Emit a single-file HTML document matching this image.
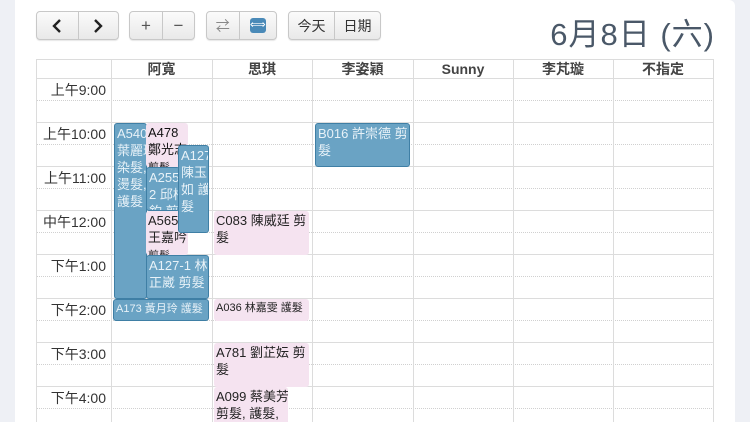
<!DOCTYPE html><html><head><meta charset="utf-8"><style>
*{margin:0;padding:0;box-sizing:border-box}
html,body{width:750px;height:422px;overflow:hidden}
body{background:#eef0f5;font-family:"Liberation Sans","Noto Sans CJK TC",sans-serif;position:relative}
.card{position:absolute;left:15px;top:0;width:720px;height:422px;background:#fff;border-radius:0 6px 0 0}
.bg{position:absolute;display:flex;height:29px;top:11px;border:1px solid #c8c8c8;border-radius:4px;background:linear-gradient(#fbfbfb,#e9e9e9);box-shadow:0 1px 1px rgba(0,0,0,.1)}
.bg div{height:100%;display:flex;align-items:center;justify-content:center;font-size:14px;color:#333;border-left:1px solid #c8c8c8}
.bg div:first-child{border-left:none}
.title{position:absolute;right:35px;top:9px;font-size:31px;color:#4a5868;font-weight:normal;letter-spacing:1px}
.ln{position:absolute;left:36px;width:678px;height:0}
.s{border-top:1px solid #dcdcdc}
.d{border-top:1px dotted #d0d0d0}
.v{position:absolute;top:59px;height:363px;border-left:1px solid #dcdcdc}
.hd{position:absolute;top:59px;height:20px;font-size:14px;font-weight:bold;color:#444;text-align:center;line-height:20px}
.t{position:absolute;left:36px;width:70px;text-align:right;font-size:14px;color:#333}
.e{position:absolute;font-size:13px;line-height:17px;padding:1px 1px 1px 2px;overflow:hidden;border-radius:3px;white-space:nowrap}
.b{background:#6aa3c4;border:1px solid #3f7fa5;color:#e8f2f8}
.p{background:#f5e3f0;color:#222}
.sm{font-size:11px}
</style></head><body>
<div class="card"></div>
<div class="bg" style="left:36px;width:83px"><div style="width:41px"><svg width="10" height="14" viewBox="0 0 10 14"><path d="M8 1L2 7l6 6" fill="none" stroke="#222" stroke-width="2.4"/></svg></div><div style="width:41px"><svg width="10" height="14" viewBox="0 0 10 14"><path d="M2 1l6 6-6 6" fill="none" stroke="#222" stroke-width="2.4"/></svg></div></div>
<div class="bg" style="left:129px;width:66px"><div style="width:33px;font-size:17px;color:#555">+</div><div style="width:33px;font-size:17px;color:#555">−</div></div>
<div class="bg" style="left:206px;width:71px"><div style="width:32px;color:#888">⇄</div><div style="width:38px"><span style="display:inline-block;width:16px;height:15px;background:#4a8ab8;border-radius:3px;color:#fff;font-size:11px;line-height:15px;text-align:center">⟺</span></div></div>
<div class="bg" style="left:288px;width:93px"><div style="width:46px">今天</div><div style="width:47px">日期</div></div>
<div class="title">6月8日 (六)</div>
<div class="ln s" style="top:59px"></div>
<div class="ln s" style="top:78px"></div>
<div class="ln d" style="top:100px"></div>
<div class="ln s" style="top:122px"></div>
<div class="ln d" style="top:144px"></div>
<div class="ln s" style="top:166px"></div>
<div class="ln d" style="top:188px"></div>
<div class="ln s" style="top:210px"></div>
<div class="ln d" style="top:232px"></div>
<div class="ln s" style="top:254px"></div>
<div class="ln d" style="top:276px"></div>
<div class="ln s" style="top:298px"></div>
<div class="ln d" style="top:320px"></div>
<div class="ln s" style="top:342px"></div>
<div class="ln d" style="top:364px"></div>
<div class="ln s" style="top:386px"></div>
<div class="ln d" style="top:408px"></div>
<div class="v" style="left:36px"></div><div class="v" style="left:111px"></div><div class="v" style="left:212px"></div><div class="v" style="left:312px"></div><div class="v" style="left:413px"></div><div class="v" style="left:513px"></div><div class="v" style="left:613px"></div><div class="v" style="left:713px"></div>
<div class="hd" style="left:111px;width:101px">阿寬</div>
<div class="hd" style="left:212px;width:100px">思琪</div>
<div class="hd" style="left:312px;width:101px">李姿穎</div>
<div class="hd" style="left:413px;width:100px">Sunny</div>
<div class="hd" style="left:513px;width:100px">李芃璇</div>
<div class="hd" style="left:613px;width:100px">不指定</div>
<div class="t" style="top:80px">上午9:00</div>
<div class="t" style="top:124px">上午10:00</div>
<div class="t" style="top:168px">上午11:00</div>
<div class="t" style="top:212px">中午12:00</div>
<div class="t" style="top:256px">下午1:00</div>
<div class="t" style="top:300px">下午2:00</div>
<div class="t" style="top:344px">下午3:00</div>
<div class="t" style="top:388px">下午4:00</div>
<div class="e b" style="left:114px;top:123px;width:33px;height:176px">A540<br>葉麗玲<br>染髮,<br>燙髮,<br>護髮</div>
<div class="e p" style="left:146px;top:123px;width:42px;height:44px;color:#111">A478<br>鄭光志<br><span class="sm">剪髮</span></div>
<div class="e b" style="left:146px;top:167px;width:34px;height:44px">A255-<br>2 邱柏<br>鈞 剪</div>
<div class="e p" style="left:146px;top:211px;width:42px;height:44px">A565<br>王嘉吟<br><span class="sm">剪髮</span></div>
<div class="e b" style="left:178px;top:145px;width:31px;height:88px">A127<br>陳玉<br>如 護<br>髮</div>
<div class="e b" style="left:146px;top:255px;width:63px;height:44px">A127-1 林<br>正崴 剪髮</div>
<div class="e b sm" style="left:113px;top:299px;width:96px;height:22px">A173 黃月玲 護髮</div>
<div class="e b" style="left:315px;top:123px;width:95px;height:44px">B016 許崇德 剪<br>髮</div>
<div class="e p" style="left:214px;top:211px;width:95px;height:44px">C083 陳威廷 剪<br>髮</div>
<div class="e p sm" style="left:214px;top:299px;width:95px;height:22px">A036 林嘉雯 護髮</div>
<div class="e p" style="left:214px;top:343px;width:95px;height:44px">A781 劉芷妘 剪<br>髮</div>
<div class="e p" style="left:214px;top:387px;width:74px;height:40px">A099 蔡美芳<br>剪髮, 護髮,<br>洗髮</div>
</body></html>
